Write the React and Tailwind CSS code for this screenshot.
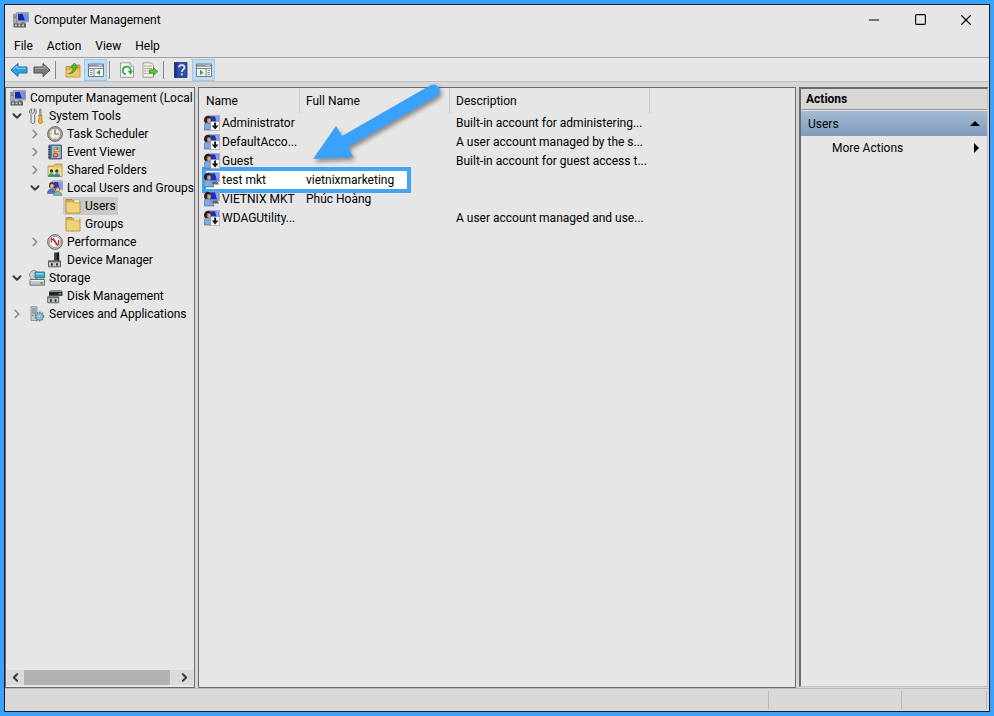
import { ChevronDown, ChevronLeft, ChevronRight, Minus, Square, X } from 'lucide-react';

function Icon({ children, className = 'h-4 w-4' }) {
  return (
    <svg viewBox="0 0 16 16" className={`${className} shrink-0`} aria-hidden="true">
      {children}
    </svg>
  );
}

const ComputerIcon = () => (
  <Icon>
    <path d="M.5 2h4v9h-4z" fill="#a9adb2" stroke="#74797f" strokeWidth=".6" />
    <path d="M1.200 4h2.400M1.200 5.500h2.400" stroke="#5f646a" strokeWidth=".7" />
    <path d="M3.500.5h12v9.500h-12z" fill="#b4bac4" stroke="#7d838c" strokeWidth=".6" />
    <path d="M5 1.800h9.500V8.500H5z" fill="#1526a8" />
    <path d="M9.500 1.800h5V8.500H12z" fill="#6f90ee" />
    <path d="M8 10h4v1.400H8z" fill="#7d838a" />
    <path d="M.5 11.300h12.500v4.200H.5z" fill="#5d6166" />
    <path d="M2 12.500h1.800v1.800H2zM5.500 12.500h1.800v1.800H5.500zM9 12.500h1.800v1.800H9z" fill="#d9dcdf" />
  </Icon>
);

const ToolsIcon = () => (
  <Icon>
    <path d="M2.300.8v3.400l1.500 1.400 1.500-1.400V.8C7.500 1.800 7.800 4.800 5.700 6.600V14c0 2-3.700 2-3.700 0V6.600C-.1 4.800.2 1.800 2.300.8z" fill="#e4e4e4" stroke="#5d6165" strokeWidth=".9" />
    <path d="M10.500 1h1.800l-.3 6h-1.200z" fill="#a7a9ac" stroke="#75787b" strokeWidth=".6" />
    <path d="M9.600 7.500h3.600l-.6 2 .9 4.500c.1 2-4.200 2-4.100 0l.8-4.500z" fill="#f2b51c" stroke="#a87407" strokeWidth=".7" />
  </Icon>
);

const ClockIcon = () => (
  <Icon>
    <circle cx="8" cy="8" r="7.400" fill="#a2a2a0" stroke="#626262" strokeWidth=".9" />
    <circle cx="8" cy="8" r="5.600" fill="#f4ecd4" stroke="#85857f" strokeWidth=".6" />
    <path d="M8 3.500V8h3.700" fill="none" stroke="#54606e" strokeWidth="1.200" />
    <path d="M8 11.500v1.300M3.300 8h1.300" stroke="#8c8c86" strokeWidth=".8" />
  </Icon>
);

const EventIcon = () => (
  <Icon>
    <path d="M2 1h12.500v14H2z" fill="#5d7ea9" stroke="#34506f" strokeWidth=".8" />
    <path d="M5 2h8.500v12H5z" fill="#a9c0dc" />
    <path d="M6 3.500h7M6 5.500h7M6 7.500h7M6 11h7" stroke="#6583ab" strokeWidth=".6" />
    <path d="M1 3h3M1 5.500h3M1 8h3M1 10.500h3M1 13h3" stroke="#33373c" strokeWidth=".9" />
    <path d="M10 2.500l3 5H7z" fill="#f6d22e" stroke="#a88b09" strokeWidth=".5" />
    <path d="M10 4v2" stroke="#222" strokeWidth=".8" />
    <circle cx="8.500" cy="11" r="2.600" fill="#d93a32" />
    <path d="M7.500 10l2 2m0-2l-2 2" stroke="#fff" strokeWidth=".8" />
  </Icon>
);

const SharedIcon = () => (
  <Icon>
    <path d="M1 4h6l1-2h7v12.500H1z" fill="#e5c15c" stroke="#a98838" strokeWidth=".7" />
    <path d="M1.500 5.500h13V14h-13z" fill="#f3da8a" />
    <circle cx="4.500" cy="9" r="1.700" fill="#2f463a" />
    <circle cx="9.800" cy="9" r="1.700" fill="#2f463a" />
    <path d="M1 15c0-5 6.500-5 6.500 0z" fill="#3f9a70" />
    <path d="M6.800 15c0-5 6.500-5 6.500 0z" fill="#3c8aa0" />
  </Icon>
);

const GroupIcon = () => (
  <Icon>
    <path d="M5.500.8h10v9h-10z" fill="#c3c8d0" stroke="#7d838c" strokeWidth=".6" />
    <path d="M6.700 2h7.600v6.500H6.700z" fill="#2438ba" />
    <path d="M11 2h3.300v6.500H12.500z" fill="#7f9df0" />
    <path d="M2 5c0-4 5.500-4 5.500 0v2.500H2z" fill="#5b3a21" />
    <circle cx="5" cy="5.800" r="1.900" fill="#e9bd94" />
    <path d="M.5 13.500c0-6.500 8-6.500 8 0z" fill="#4c74bd" stroke="#2e4f8d" strokeWidth=".5" />
    <circle cx="10.500" cy="9" r="2.500" fill="#8c5a30" />
    <circle cx="10.700" cy="9.700" r="1.700" fill="#efc79f" />
    <path d="M6.500 15.500c0-5.500 8.500-5.500 8.500 0z" fill="#7fb3a4" stroke="#47796b" strokeWidth=".5" />
  </Icon>
);

const FolderIcon = () => (
  <Icon>
    <path d="M1 1.500h6l1 1.500h7v12H1z" fill="#d8ab48" stroke="#a9822f" strokeWidth=".8" />
    <path d="M9 2h5.500v2.500H9z" fill="#fbf3d4" stroke="#b99948" strokeWidth=".4" />
    <path d="M1.600 4.500h7L10 5.500h4.500v9H1.600z" fill="#f0d27b" />
  </Icon>
);

const PerformanceIcon = () => (
  <Icon>
    <circle cx="8" cy="8" r="7.300" fill="#d5d5d5" stroke="#565656" strokeWidth="1" />
    <circle cx="8" cy="8" r="5.600" fill="#fafafa" stroke="#8b8b8b" strokeWidth=".8" />
    <path d="M4.500 8.500V5l2.500 1" fill="none" stroke="#b52a2a" strokeWidth="1.200" />
    <path d="M6 4.500l4.500 7" stroke="#cf2424" strokeWidth="1.800" />
    <path d="M11.500 6v5" stroke="#b52a2a" strokeWidth="1.200" />
  </Icon>
);

const DeviceIcon = () => (
  <Icon>
    <path d="M7 .5h5v8.500H7z" fill="#444" />
    <path d="M9.800.5h2.400v8.500H9.800z" fill="#1c1c1c" />
    <path d="M1.500 8.800h12v6h-12z" fill="#c6c8c9" stroke="#515355" strokeWidth=".9" />
    <path d="M2 9h11v1.300H2z" fill="#6a6d70" />
    <path d="M4 11.300h1.700v2.400H4zM9.200 11.300h1.700v2.400H9.200z" fill="#202224" />
  </Icon>
);

const StorageIcon = () => (
  <Icon>
    <circle cx="5" cy="5" r="4.500" fill="#ced4d8" stroke="#757c81" strokeWidth=".8" />
    <circle cx="5" cy="5" r="1.300" fill="#f5f5f5" stroke="#8b9195" strokeWidth=".5" />
    <path d="M6 2h9.500v6H6z" fill="#3aa7d3" stroke="#32677e" strokeWidth=".8" />
    <path d="M7 3h7.500v1.600H7z" fill="#8ad7f0" />
    <path d="M1 9.500h14.500v5.700H1z" fill="#bfc2c5" stroke="#565b5f" strokeWidth=".8" />
    <path d="M1.500 10h13.500v1.300h-13.500z" fill="#eceeef" />
    <path d="M11.500 12h2v2h-2z" fill="#2fb02f" />
  </Icon>
);

const DiskIcon = () => (
  <Icon>
    <path d="M2 3.500h13.500v4.300H2z" fill="#242628" />
    <path d="M3.500 2h11l1 1.700H2z" fill="#8c8f91" />
    <path d="M11.500 5h2.700v1.500h-2.700z" fill="#35cf3c" />
    <path d="M.7 8.800h11v6h-11z" fill="#c6c8c9" stroke="#515355" strokeWidth=".9" />
    <path d="M1.200 9h10v1.300h-10z" fill="#6a6d70" />
    <path d="M3 11.300h1.700v2.400H3zM7.700 11.300h1.700v2.400H7.700z" fill="#202224" />
  </Icon>
);

const ServicesIcon = () => (
  <Icon>
    <path d="M2 .8h6v13.700H2z" fill="#c4cbd0" stroke="#7b848a" strokeWidth=".8" />
    <path d="M3 3h4M3 5h4M3 7h4" stroke="#69737a" strokeWidth=".9" />
    <circle cx="4" cy="9.500" r=".8" fill="#4fa04f" />
    <circle cx="10.500" cy="10.500" r="4.200" fill="#8fb2c9" stroke="#56809b" strokeWidth="1.400" strokeDasharray="1.600 1.100" />
    <circle cx="10.500" cy="10.500" r="3.200" fill="#a6c3d5" stroke="#5a88a3" strokeWidth=".6" />
    <circle cx="10.500" cy="10.500" r="1.200" fill="#e9eef1" stroke="#5a88a3" strokeWidth=".5" />
  </Icon>
);

const UserIcon = ({ disabled }) => (
  <Icon>
    <path d="M4.500.3h11.200v9.200H4.500z" fill="#b9bfcb" stroke="#7f8695" strokeWidth=".5" />
    <path d="M5.500 1.300h9v7.200h-9z" fill="#1c30c0" />
    <path d="M11 1.300h3.500v7.200H13z" fill="#8ea6f3" />
    <path d="M8.500 9.500h5l1.500 3H8z" fill="#5f656e" />
    <path d="M0 6C-.5-.8 7.500-.8 6.800 4.500L6 8H1z" fill="#2a211c" />
    <path d="M3.300 3.500h3.400v3.700L5 8.700 3.300 7z" fill="#d8ab84" />
    <path d="M0 15V9.500c2-2.500 6-2.500 8.500 1.500l1.500 4z" fill="#7fa9dc" stroke="#3d6294" strokeWidth=".6" />
    {disabled && (
      <>
        <path d="M6.500 6.500H15.700V15.700H6.500z" fill="#f4f4f4" stroke="#8a8a8a" strokeWidth=".6" />
        <path d="M11.100 7.500v4" stroke="#151515" strokeWidth="1.800" />
        <path d="M7.800 10.600h6.600L11.100 14.600z" fill="#151515" />
      </>
    )}
  </Icon>
);

const ArrowIcon = ({ back }) => (
  <svg viewBox="0 0 18 16" className="h-4 w-[18px]" aria-hidden="true">
    {back ? (
      <path d="M1 8l7-6.500V5h9v6H8v3.500z" fill="#2f9fe0" stroke="#1b6daf" />
    ) : (
      <path d="M17 8l-7-6.500V5H1v6h9v3.500z" fill="#7c7c7c" stroke="#505050" />
    )}
    {back ? <path d="M3 7.500l4-3.500v2.300h9" fill="none" stroke="#82d0f8" /> : <path d="M2 6.300h9V4l4 3.500" fill="none" stroke="#aaa" />}
  </svg>
);

const UpFolderIcon = () => (
  <Icon>
    <path d="M1 4.500h5L7 3h8v12H1z" fill="#dfb352" stroke="#a98236" strokeWidth=".7" />
    <path d="M1.500 8h13v6.500h-13z" fill="#eec76c" />
    <path d="M3.500 11.500C7 10.500 8 8.500 8 5.800H5.500L9.500 1 13 5.800h-2.300C10.500 10 7.500 12 3.500 11.500z" fill="#58b92c" stroke="#2f7e18" strokeWidth=".6" />
  </Icon>
);

const PaneIcon = ({ right }) => (
  <Icon>
    <path d="M.5 2h15v12.500H.5z" fill="#f4f5f6" stroke="#727a83" />
    <path d="M1 2.500h14v2.300H1z" fill="#8995a3" />
    <path d="M10.500 3.500h1M12.500 3.500h1" stroke="#fff" />
    <path d="M1 6.500h14" stroke="#7d8791" />
    {right ? (
      <>
        <path d="M10 7v7" stroke="#7d8791" />
        <path d="M11.500 8.500h2.500M11.500 10.500h2.500M11.500 12.500h2.500" stroke="#8495a8" />
        <path d="M4 7.800l3.500 2.700L4 13.200z" fill="#35a626" />
      </>
    ) : (
      <>
        <path d="M6 7v7" stroke="#7d8791" />
        <path d="M2 8.500h2.500M2 10.500h2.500M2 12.500h2.500" stroke="#8495a8" />
        <path d="M12 7.800l-3.500 2.700 3.500 2.700z" fill="#35a626" />
      </>
    )}
  </Icon>
);

const RefreshIcon = () => (
  <Icon>
    <path d="M1.500.8h9.500l3.500 3.500v11h-13z" fill="#f8f8f8" stroke="#8c8c8c" strokeWidth=".8" />
    <path d="M11 .8v3.500h3.500" fill="#ddd" stroke="#8c8c8c" strokeWidth=".6" />
    <path d="M6.800 12.500A4 4 0 1 1 11.700 9" fill="none" stroke="#36a53b" strokeWidth="1.800" />
    <path d="M8.700 8.800h5.300l-2.400 4z" fill="#36a53b" />
  </Icon>
);

const ExportIcon = () => (
  <Icon>
    <path d="M1 .8h8L11.500 3v12.300H1z" fill="#f5f0d9" stroke="#8f8b78" strokeWidth=".8" />
    <path d="M2.500 4h1M2.500 6.500h1M2.500 9h1M2.500 11.500h1" stroke="#3f566c" />
    <path d="M4.500 4H10M4.500 6.500H10M4.500 9H8M4.500 11.500H10" stroke="#8d9399" strokeWidth=".8" />
    <path d="M7.500 7.800h4V5.500l4.300 4-4.300 4v-2.300h-4z" fill="#5bc23e" stroke="#2c8b20" strokeWidth=".6" />
  </Icon>
);

const HelpIcon = () => (
  <Icon>
    <path d="M1.500.5h12.500v15H1.500z" fill="#2c4db0" stroke="#1d3378" strokeWidth=".8" />
    <path d="M1.500.5h2.200v15H1.500z" fill="#1d3378" />
    <path d="M6 5.500c0-3.500 5.500-3.300 5.500 0 0 2.200-2.700 2.200-2.700 4.500" fill="none" stroke="#fff" strokeWidth="1.500" />
    <path d="M7.900 11.500h1.800v1.800H7.900z" fill="#fff" />
  </Icon>
);

const tree = [
  {
    label: 'System Tools',
    icon: ToolsIcon,
    open: true,
    children: [
      { label: 'Task Scheduler', icon: ClockIcon, open: false },
      { label: 'Event Viewer', icon: EventIcon, open: false },
      { label: 'Shared Folders', icon: SharedIcon, open: false },
      {
        label: 'Local Users and Groups',
        icon: GroupIcon,
        open: true,
        children: [
          { label: 'Users', icon: FolderIcon, selected: true },
          { label: 'Groups', icon: FolderIcon },
        ],
      },
      { label: 'Performance', icon: PerformanceIcon, open: false },
      { label: 'Device Manager', icon: DeviceIcon },
    ],
  },
  {
    label: 'Storage',
    icon: StorageIcon,
    open: true,
    children: [{ label: 'Disk Management', icon: DiskIcon }],
  },
  { label: 'Services and Applications', icon: ServicesIcon, open: false },
];

const users = [
  { name: 'Administrator', full: '', description: 'Built-in account for administering...', disabled: true },
  { name: 'DefaultAcco...', full: '', description: 'A user account managed by the s...', disabled: true },
  { name: 'Guest', full: '', description: 'Built-in account for guest access t...', disabled: true },
  { name: 'test mkt', full: 'vietnixmarketing', description: '', marked: true },
  { name: 'VIETNIX MKT', full: 'Phúc Hoàng', description: '' },
  { name: 'WDAGUtility...', full: '', description: 'A user account managed and use...', disabled: true },
];

function TreeNode({ node }) {
  const NodeIcon = node.icon;
  return (
    <li role="treeitem" aria-expanded={node.open} aria-selected={!!node.selected}>
      <div className="flex h-[18px] items-center">
        {node.open === undefined ? (
          <span className="w-4 shrink-0" />
        ) : (
          <button aria-label={`Toggle ${node.label}`} className="flex w-4 shrink-0 justify-center">
            {node.open ? (
              <ChevronDown size={14} strokeWidth={3.5} className="text-[#404040]" />
            ) : (
              <ChevronRight size={14} strokeWidth={3} className="text-[#8c8c8c]" />
            )}
          </button>
        )}
        <span className={`ml-0.5 flex h-[18px] items-center gap-1 pr-0.5 pl-0.5 whitespace-nowrap ${node.selected ? 'bg-[#c9c9c9]' : ''}`}>
          <NodeIcon />
          {node.label}
        </span>
      </div>
      {node.children && (
        <ul role="group" className="pl-[18px]">
          {node.children.map((child) => (
            <TreeNode key={child.label} node={child} />
          ))}
        </ul>
      )}
    </li>
  );
}

function ToolButton({ label, active, children }) {
  return (
    <button
      aria-label={label}
      className={`flex h-[22px] w-[23px] items-center justify-center ${active ? 'border border-[#9ccbee] bg-[#bfdcf1]' : ''}`}
    >
      {children}
    </button>
  );
}

const ToolDivider = () => <span className="mr-[5px] ml-0.5 h-[18px] w-px bg-[#8a8a8a]" />;

export default function App() {
  return (
    <div className="h-screen bg-[#3aa2fd] p-1 font-[Roboto,'Noto_Sans',sans-serif] text-xs text-black">
      <div className="flex h-full flex-col border border-[#1a1f26] bg-[#e6e6e6]">
        {/* Title bar */}
        <header className="flex h-[29px] shrink-0 items-center pl-2">
          <ComputerIcon />
          <h1 className="ml-[5px] flex-1">Computer Management</h1>
          <button aria-label="Minimize" className="flex h-full w-[46px] items-center justify-center">
            <Minus size={16} strokeWidth={1.5} />
          </button>
          <button aria-label="Maximize" className="flex h-full w-[46px] items-center justify-center">
            <Square size={13} strokeWidth={2} />
          </button>
          <button aria-label="Close" className="flex h-full w-[46px] items-center justify-center">
            <X size={18} strokeWidth={1.5} />
          </button>
        </header>

        <nav className="flex h-6 shrink-0 items-center border-b border-[#a0a0a0] pl-0.5">
          {['File', 'Action', 'View', 'Help'].map((item) => (
            <button key={item} className="px-[7px]">{item}</button>
          ))}
        </nav>

        {/* Toolbar */}
        <div role="toolbar" className="flex h-6 shrink-0 items-center border-b border-[#c0c0c0] pt-px pl-0.5">
          <ToolButton label="Back"><ArrowIcon back /></ToolButton>
          <ToolButton label="Forward"><ArrowIcon /></ToolButton>
          <ToolDivider />
          <ToolButton label="Up one level"><UpFolderIcon /></ToolButton>
          <ToolButton label="Show or hide console tree" active><PaneIcon /></ToolButton>
          <ToolDivider />
          <ToolButton label="Refresh"><RefreshIcon /></ToolButton>
          <ToolButton label="Export list"><ExportIcon /></ToolButton>
          <ToolDivider />
          <ToolButton label="Help"><HelpIcon /></ToolButton>
          <ToolButton label="Show or hide action pane" active><PaneIcon right /></ToolButton>
        </div>

        <main className="flex min-h-0 flex-1 gap-[3px] bg-[#d6d6d6] pt-[5px] pr-px">
          {/* Console tree */}
          <aside className="flex w-[190px] shrink-0 flex-col border border-[#6b6b6b] bg-[#e6e6e6]">
            <div role="tree" className="flex-1 overflow-hidden pt-px pl-[3px]">
              <div className="flex h-[18px] items-center gap-1 pl-px whitespace-nowrap">
                <ComputerIcon />
                Computer Management (Local
              </div>
              <ul>
                {tree.map((node) => (
                  <TreeNode key={node.label} node={node} />
                ))}
              </ul>
            </div>
            <div className="mx-px mb-0.5 flex h-[15px] bg-[#dadada]">
              <button aria-label="Scroll left" className="flex w-[17px] items-center justify-center">
                <ChevronLeft size={13} strokeWidth={4} className="text-[#404040]" />
              </button>
              <div className="flex-1">
                <div className="h-full w-[96%] bg-[#b2b2b2]" />
              </div>
              <button aria-label="Scroll right" className="flex w-[17px] items-center justify-center">
                <ChevronRight size={13} strokeWidth={4} className="text-[#404040]" />
              </button>
            </div>
          </aside>

          {/* User list */}
          <section className="relative min-w-0 flex-1 border border-[#6b6b6b] bg-[#e6e6e6]">
            <table className="isolate w-[451px] table-fixed border-collapse text-left whitespace-nowrap">
              <colgroup>
                <col className="w-[101px]" />
                <col className="w-[150px]" />
                <col className="w-[200px]" />
              </colgroup>
              <thead>
                <tr className="h-[25px]">
                  {['Name', 'Full Name', 'Description'].map((title, i) => (
                    <th key={title} className="p-0 font-normal">
                      <span className={`flex h-[25px] items-center border-r border-[#cbcbcb] ${i === 0 ? 'pl-[7px]' : 'pl-1.5'}`}>{title}</span>
                    </th>
                  ))}
                </tr>
              </thead>
              <tbody>
                {users.map((user) => (
                  <tr key={user.name} className="h-[19px]">
                    <td className="relative p-0">
                      {user.marked && (
                        <span className="absolute -top-[3px] left-[3px] -z-10 h-[26px] w-[209px] border-4 border-[#43a3f4] bg-white" />
                      )}
                      <span className="flex items-center gap-0.5 pl-[5px]">
                        <UserIcon disabled={user.disabled} />
                        {user.name}
                      </span>
                    </td>
                    <td className="p-0 pl-1.5">{user.full}</td>
                    <td className="p-0 pl-1.5">{user.description}</td>
                  </tr>
                ))}
              </tbody>
            </table>

            {/* Pointer arrow */}
            <svg viewBox="308 80 140 90" className="absolute -top-2 left-[109px] w-[140px] drop-shadow-[2px_3px_2px_rgba(0,0,0,0.4)]" aria-hidden="true">
              <path d="M313 159L336 126L342 136L430 85.500A6 6 0 0 1 437 96L348 147L353 157Z" fill="#3aa2fd" />
            </svg>
          </section>

          {/* Actions */}
          <aside className="mb-px w-[189px] shrink-0 border-t-2 border-r border-b border-l-2 border-t-[#6b6b6b] border-r-[#c4c4c4] border-b-[#c4c4c4] border-l-[#6b6b6b] bg-[#e6e6e6]">
            <h2 className="flex h-[21px] items-center border-b border-[#949494] bg-[#d9d7d5] pl-[5px] font-bold">Actions</h2>
            <button className="mt-px flex h-[25px] w-full items-center justify-between bg-linear-to-b from-[#a3bad4] to-[#7f9cbc] pr-[7px] pl-[7px]">
              Users
              <svg viewBox="0 0 10 5" className="h-[5px] w-2.5" aria-hidden="true"><path d="M0 5l5-5 5 5z" /></svg>
            </button>
            <button className="flex h-[23px] w-full items-center justify-between pr-2 pl-[31px]">
              More Actions
              <svg viewBox="0 0 5 10" className="h-2.5 w-[5px]" aria-hidden="true"><path d="M0 0l5 5-5 5z" /></svg>
            </button>
          </aside>
        </main>

        {/* Status bar */}
        <footer className="flex h-[23px] shrink-0 justify-end border-t border-[#bcbcbc] bg-[#d8d8d8] py-0.5 pr-0.5">
          <span className="w-[133px] border-l border-[#b8b8b8]" />
          <span className="w-[86px] border-x border-[#b8b8b8]" />
        </footer>
      </div>
    </div>
  );
}
